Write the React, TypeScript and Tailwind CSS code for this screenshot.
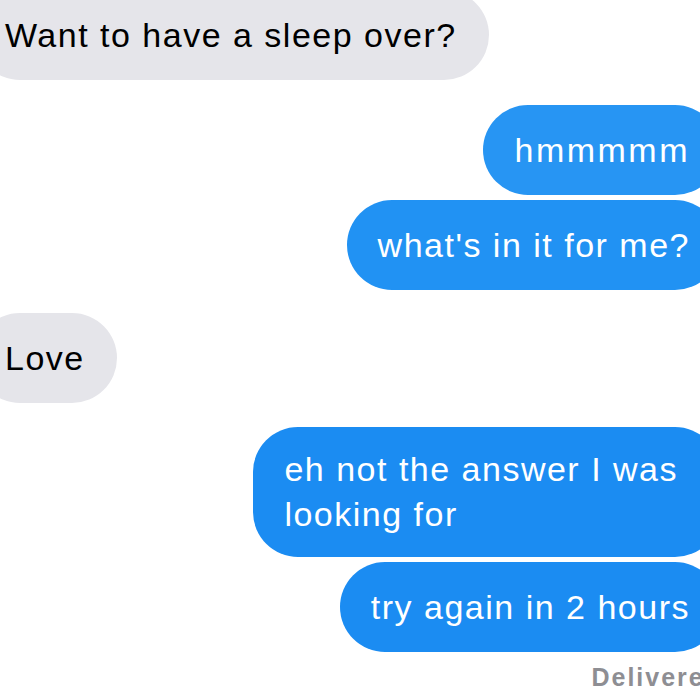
const font = { fontFamily: '"Liberation Sans", Arial, sans-serif' }

function Gray({ text, className = '' }: { text: string; className?: string }) {
  return (
    <div className={`self-start -ml-[25px] rounded-[45px] bg-[#e5e5ea] pl-[30px] pr-[32px] py-[22px] text-[34px] tracking-[1.5px] leading-[46px] text-black ${className}`}>
      {text}
    </div>
  )
}

function Blue({ children, className = '' }: { children: React.ReactNode; className?: string }) {
  return (
    <div className={`self-end -mr-[20px] rounded-[45px] bg-[#1b8cf2] pl-[31px] text-[34px] tracking-[1.5px] text-white ${className}`}>
      {children}
    </div>
  )
}

export default function App() {
  return (
    <div className="h-[700px] w-[700px] overflow-hidden bg-white" style={font}>
      <div className="flex flex-col">
        <Gray text="Want to have a sleep over?" className="-mt-[10px]" />
        <Blue className="mt-[25px] py-[22px] pr-[30px] leading-[46px] bg-[#2795f3] tracking-[2.5px]">hmmmmm</Blue>
        <Blue className="mt-[5px] py-[22px] pr-[30px] leading-[46px] bg-[#2192f3]">what's in it for me?</Blue>
        <Gray text="Love" className="mt-[23px]" />
        <Blue className="mt-[24px] py-[20px] pr-[42px] leading-[45px] rounded-[40px]">
          eh not the answer I was
          <br />
          looking for
        </Blue>
        <Blue className="mt-[5px] py-[22px] pr-[30px] leading-[46px]">try again in 2 hours</Blue>
        <div className="self-end -mr-[22px] mt-[10px] text-[25px] tracking-[2px] font-bold leading-[30px] text-[#8e8e93]">Delivered</div>
      </div>
    </div>
  )
}
